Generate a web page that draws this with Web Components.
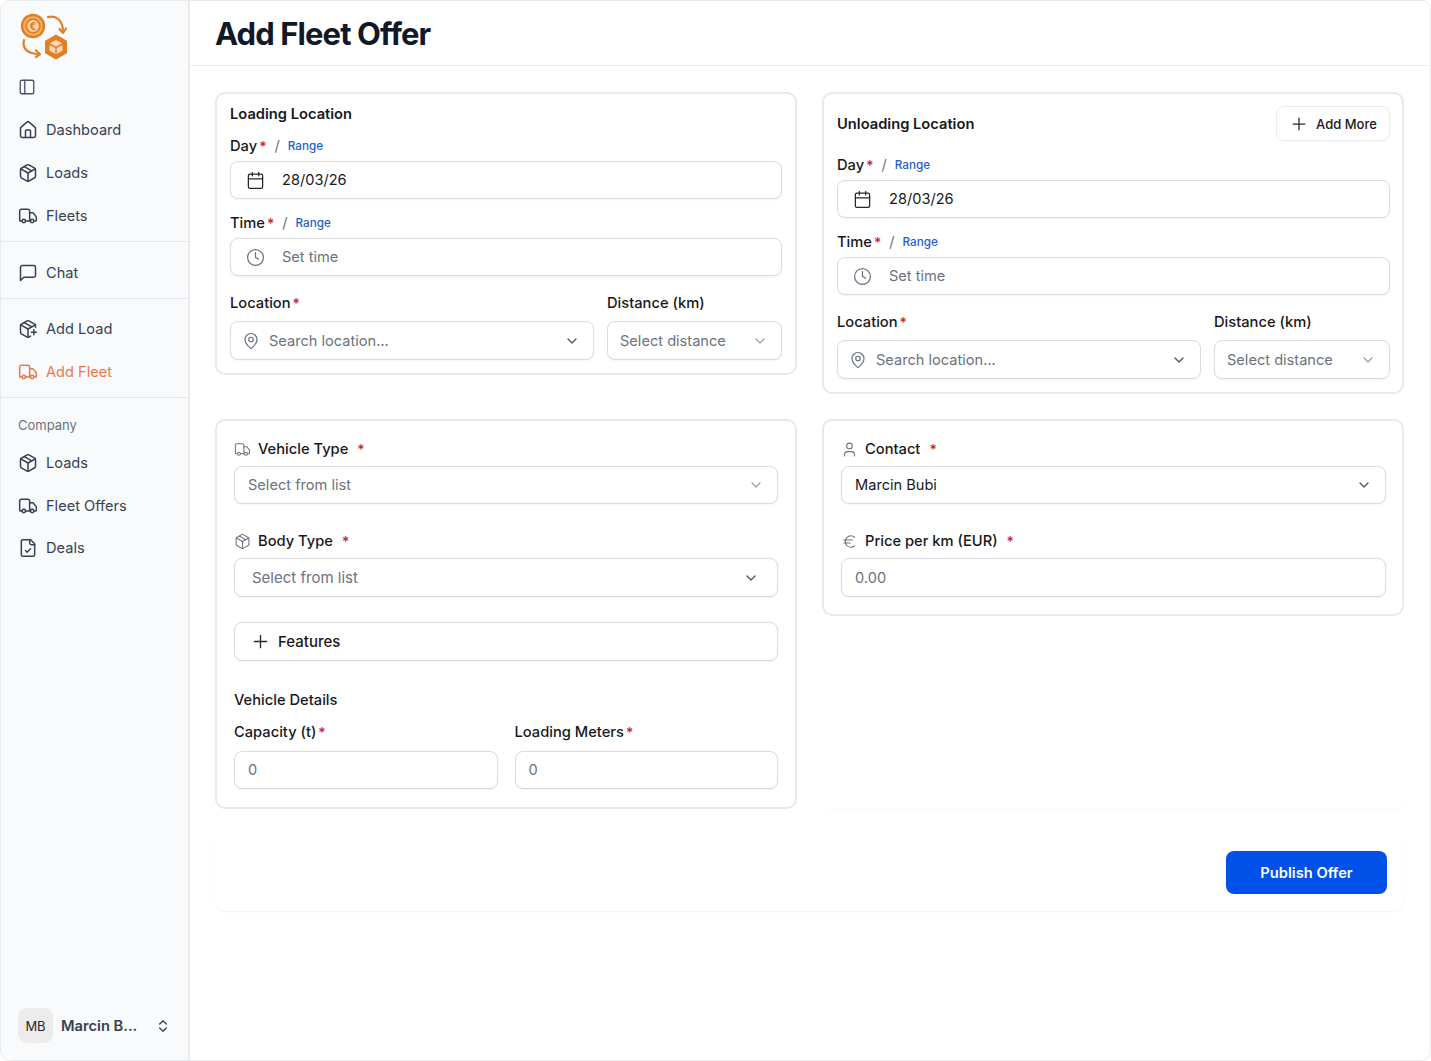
<!DOCTYPE html>
<html lang="en">
<head>
<meta charset="utf-8">
<title>Add Fleet Offer</title>
<style>
html, body { margin: 0; height: 100%; background: #fff; font-family: Inter, "Liberation Sans", sans-serif; }
</style>
</head>
<body>
<fleet-app></fleet-app>
<script>
const ICONS = {
    house: '<path d="M15 21v-8a1 1 0 0 0-1-1h-4a1 1 0 0 0-1 1v8"/><path d="M3 10a2 2 0 0 1 .709-1.528l7-5.999a2 2 0 0 1 2.582 0l7 5.999A2 2 0 0 1 21 10v9a2 2 0 0 1-2 2H5a2 2 0 0 1-2-2z"/>',
    package: '<path d="M11 21.73a2 2 0 0 0 2 0l7-4A2 2 0 0 0 21 16V8a2 2 0 0 0-1-1.73l-7-4a2 2 0 0 0-2 0l-7 4A2 2 0 0 0 3 8v8a2 2 0 0 0 1 1.73z"/><path d="M12 22V12"/><path d="m3.3 7 8.7 5 8.7-5"/><path d="m7.5 4.27 9 5.15"/>',
    truck: '<path d="M14 18V6a2 2 0 0 0-2-2H4a2 2 0 0 0-2 2v11a1 1 0 0 0 1 1h2"/><path d="M15 18H9"/><path d="M19 18h2a1 1 0 0 0 1-1v-3.65a1 1 0 0 0-.22-.624l-3.48-4.35A1 1 0 0 0 17.52 8H14"/><circle cx="17" cy="18" r="2"/><circle cx="7" cy="18" r="2"/>',
    chat: '<path d="M21 15a2 2 0 0 1-2 2H7l-4 4V5a2 2 0 0 1 2-2h14a2 2 0 0 1 2 2z"/>',
    packagePlus: '<path d="M16 16h6"/><path d="M19 13v6"/><path d="M21 10V8a2 2 0 0 0-1-1.73l-7-4a2 2 0 0 0-2 0l-7 4A2 2 0 0 0 3 8v8a2 2 0 0 0 1 1.73l7 4a2 2 0 0 0 2 0l2-1.14"/><path d="m7.5 4.27 9 5.15"/><path d="M3.29 7 12 12l8.71-5"/><path d="M12 22V12"/>',
    fileCheck: '<path d="M15 2H6a2 2 0 0 0-2 2v16a2 2 0 0 0 2 2h12a2 2 0 0 0 2-2V7Z"/><path d="M14 2v4a2 2 0 0 0 2 2h4"/><path d="m9 15 2 2 4-4"/>',
    panel: '<rect x="3" y="3" width="18" height="18" rx="2"/><path d="M9 3v18"/>',
    calendar: '<path d="M8 2v4"/><path d="M16 2v4"/><rect x="3" y="4" width="18" height="18" rx="2"/><path d="M3 10h18"/>',
    clock: '<circle cx="12" cy="12" r="10"/><path d="M12 6v6l4 2"/>',
    pin: '<path d="M20 10c0 4.993-5.539 10.193-7.399 11.799a1 1 0 0 1-1.202 0C9.539 20.193 4 14.993 4 10a8 8 0 0 1 16 0"/><circle cx="12" cy="10" r="3"/>',
    chevron: '<path d="m6 9 6 6 6-6"/>',
    updown: '<path d="m7 15 5 5 5-5"/><path d="m7 9 5-5 5 5"/>',
    plus: '<path d="M5 12h14"/><path d="M12 5v14"/>',
    user: '<path d="M19 21v-2a4 4 0 0 0-4-4H9a4 4 0 0 0-4 4v2"/><circle cx="12" cy="7" r="4"/>',
    euro: '<path d="M4 10h12"/><path d="M4 14h9"/><path d="M19 6a7.7 7.7 0 0 0-5.2-2A7.9 7.9 0 0 0 6 12c0 4.4 3.5 8 7.8 8 2 0 3.8-.8 5.2-2"/>'
}

function icon(name, size, color, width) {
    return `<svg width="${size}" height="${size}" viewBox="0 0 24 24" fill="none" stroke="${color}" stroke-width="${width || 2}" stroke-linecap="round" stroke-linejoin="round" style="flex:none;display:block">${ICONS[name]}</svg>`
}

class NavItem extends HTMLElement {
    connectedCallback() {
        const color = this.hasAttribute('active') ? '#e8794a' : '#374151'
        this.attachShadow({ mode: 'open' })
        this.shadowRoot.innerHTML = `
            <style>
                :host { display: flex; align-items: center; gap: 8px; height: 43px; padding-left: 17px; font-size: 14.6px; color: ${color}; }
            </style>
            ${icon(this.getAttribute('icon'), 20, color, 1.8)}
            <slot></slot>
        `
    }
}
customElements.define('nav-item', NavItem)

class AppSidebar extends HTMLElement {
    constructor() {
        super()
        this.attachShadow({ mode: 'open' })
        this.shadowRoot.innerHTML = `
            <style>
                :host { display: flex; flex-direction: column; flex: none; box-sizing: border-box; width: 189px; height: 100%; background: #f9fafb; border-right: 2px solid #e9eaec; border-radius: 10px 0 0 10px; }
                .logo { display: block; margin: 10px 0 0 18px; }
                .toggle { margin: 17px 0 12px 17px; }
                .group { padding-bottom: 4px; border-bottom: 1px solid #e5e7eb; margin-bottom: 9px; }
                .group.chat { margin-bottom: 8px; }
                .group.last { border: 0; margin: 0; }
                .last nav-item { height: 42.5px; }
                .company { font-size: 13px; line-height: 16px; color: #6b7280; padding: 10px 0 9px 17px; }
                .user { margin-top: auto; display: flex; align-items: center; height: 35px; padding: 0 0 17px 17px; }
                .avatar { flex: none; width: 35px; height: 35px; border-radius: 9px; background: #ececed; color: #27272a; font-size: 13px; display: flex; align-items: center; justify-content: center; }
                .name { margin-left: 8px; width: 94px; font-size: 14.7px; font-weight: 600; color: #374151; }
            </style>
            <svg class="logo" width="50" height="50" viewBox="0 0 50 50" fill="none" stroke-linecap="round" stroke-linejoin="round">
                <circle cx="14" cy="15" r="11" fill="#f5b06a" stroke="#e07f25" stroke-width="2.4"/>
                <circle cx="14" cy="15" r="6.8" fill="#fbd3a8" stroke="#e07f25" stroke-width="1.8"/>
                <text x="14" y="19" font-size="10" font-weight="700" text-anchor="middle" fill="#d9761c" font-family="Inter, sans-serif">€</text>
                <path d="M29 6c8-2 15 3 15 15" stroke="#e07f25" stroke-width="2.2"/>
                <path d="M40.500 18l3.500 4 3-4.500" stroke="#e07f25" stroke-width="2.200"/>
                <path d="M5 29c-2 8 3 14 15 14" stroke="#e07f25" stroke-width="2.2"/>
                <path d="M17 39.500l4 3.500-4 3" stroke="#e07f25" stroke-width="2.2"/>
                <path d="M37 24.500l10 5.750v11.500l-10 5.750-10-5.750v-11.500z" fill="#e07f25" stroke="#e07f25" stroke-width="2"/>
                <path d="M37 29l6.500 3.500v7l-6.500 4-6.500-4v-7z" fill="#fbd9b5"/>
                <path d="M30.500 33l6.500 3.500 6.500-3.500M37 36.500v7" stroke="#e07f25" stroke-width="1.5"/>
            </svg>
            <div class="toggle">${icon('panel', 18, '#4b5563', 1.8)}</div>
            <div class="group">
                <nav-item icon="house">Dashboard</nav-item>
                <nav-item icon="package">Loads</nav-item>
                <nav-item icon="truck">Fleets</nav-item>
            </div>
            <div class="group chat">
                <nav-item icon="chat">Chat</nav-item>
            </div>
            <div class="group">
                <nav-item icon="packagePlus">Add Load</nav-item>
                <nav-item icon="truck" active>Add Fleet</nav-item>
            </div>
            <div class="group last">
                <div class="company">Company</div>
                <nav-item icon="package">Loads</nav-item>
                <nav-item icon="truck">Fleet Offers</nav-item>
                <nav-item icon="fileCheck">Deals</nav-item>
            </div>
            <div class="user">
                <div class="avatar">MB</div>
                <div class="name">Marcin B...</div>
                ${icon('updown', 16, '#374151', 2)}
            </div>
        `
    }
}
customElements.define('app-sidebar', AppSidebar)

class FieldLabel extends HTMLElement {
    connectedCallback() {
        const ic = this.getAttribute('icon')
        const spaced = !!ic
        this.attachShadow({ mode: 'open' })
        this.shadowRoot.innerHTML = `
            <style>
                :host { display: flex; align-items: center; height: 20px; font-size: 14.7px; font-weight: 500; color: #18181b; white-space: nowrap; }
                svg { margin-right: 7px; }
                .req { color: #c81e3a; margin-left: ${spaced ? 9 : 2}px; font-size: 14px; }
                .sep { color: #6b7280; font-weight: 400; margin: 0 8px 0 8px; }
                .range { color: #1d5fc7; font-size: 11.7px; font-weight: 500; }
            </style>
            ${ic ? icon(ic, 17, '#6b7280', 1.5) : ''}
            <slot></slot>
            ${this.hasAttribute('required') ? '<span class="req">*</span>' : ''}
            ${this.hasAttribute('range') ? '<span class="sep">/</span><span class="range">Range</span>' : ''}
        `
    }
}
customElements.define('field-label', FieldLabel)

class FieldBox extends HTMLElement {
    // attrs: icon, pad, gap, h, chevron (dark|light), filled, size
    connectedCallback() {
        const ic = this.getAttribute('icon')
        const chev = this.getAttribute('chevron')
        const textColor = this.hasAttribute('filled') ? '#18181b' : '#6b7280'
        const iconColor = this.hasAttribute('filled') ? '#27272a' : '#6b7280'
        const chevColor = chev === 'light' ? '#9ca3af' : '#4b5563'
        const left = this.getAttribute('pad') || 13
        const gap = this.getAttribute('gap') || 17
        const h = this.getAttribute('h') || 38
        this.attachShadow({ mode: 'open' })
        this.shadowRoot.innerHTML = `
            <style>
                :host { display: flex; align-items: center; box-sizing: border-box; height: ${h}px; padding: 0 ${this.getAttribute('pad-right') || 13}px 0 ${left}px; gap: ${gap}px; background: #fff; border: 1px solid #d9dbdf; border-radius: 8px; box-shadow: 0 1px 2px rgba(0,0,0,.05); font-size: ${this.getAttribute('size') || 14.6}px; color: ${textColor}; white-space: nowrap; }
                .text { flex: 1; min-width: 0; }
            </style>
            ${ic ? icon(ic, this.getAttribute('icon-size') || 19, iconColor, this.getAttribute('stroke') || 1.6) : ''}
            <div class="text"><slot></slot></div>
            ${chev ? icon('chevron', 16, chevColor, 2) : ''}
        `
    }
}
customElements.define('field-box', FieldBox)

class FormCard extends HTMLElement {
    constructor() {
        super()
        this.attachShadow({ mode: 'open' })
        this.shadowRoot.innerHTML = `
            <style>
                :host { display: block; box-sizing: border-box; background: #fff; border: 2px solid #e8e9eb; border-radius: 10px; }
            </style>
            <slot></slot>
        `
    }
}
customElements.define('form-card', FormCard)

class LocationForm extends HTMLElement {
    connectedCallback() {
        const action = this.querySelector('[slot=action]')
        this.attachShadow({ mode: 'open' })
        this.shadowRoot.innerHTML = `
            <style>
                :host { display: block; }
                .wrap { padding: 10px ${action ? 12 : 13}px 13px 13px; display: flex; flex-direction: column; }
                .head { display: flex; align-items: center; justify-content: space-between; margin-bottom: ${action ? 14 : 12}px; padding-top: ${action ? 2 : 0}px; min-height: 20px; font-size: 14.7px; font-weight: 600; color: #18181b; }
                .row { display: grid; grid-template-columns: 364px 1fr; column-gap: 13px; margin-top: 17px; }
                .sp5 { margin-top: 5px; }
                .sp14 { margin-top: 14px; }
                .row field-box { margin-top: 8px; }
            </style>
            <form-card>
                <div class="wrap">
                    <div class="head"><span>${this.getAttribute('heading')}</span><slot name="action"></slot></div>
                    <field-label required range>Day</field-label>
                    <field-box class="sp5" icon="calendar" pad="15" gap="17" filled>28/03/26</field-box>
                    <field-label class="sp14" required range>Time</field-label>
                    <field-box class="sp5" icon="clock" pad="15" gap="17">Set time</field-box>
                    <div class="row">
                        <div>
                            <field-label required>Location</field-label>
                            <field-box icon="pin" h="39" pad="11" gap="9" icon-size="18" chevron="dark">Search location...</field-box>
                        </div>
                        <div>
                            <field-label>Distance (km)</field-label>
                            <field-box h="39" pad="12" chevron="light">Select distance</field-box>
                        </div>
                    </div>
                </div>
            </form-card>
        `
    }
}
customElements.define('location-form', LocationForm)

class AppButton extends HTMLElement {
    connectedCallback() {
        const primary = this.hasAttribute('primary')
        this.attachShadow({ mode: 'open' })
        this.shadowRoot.innerHTML = `
            <style>
                :host { display: inline-flex; align-items: center; justify-content: center; box-sizing: border-box; font-weight: 500; white-space: nowrap; }
                :host([primary]) { width: 161px; height: 43px; background: #0051e8; color: #fff; border-radius: 8px; font-size: 14.7px; font-weight: 600; }
                :host(:not([primary])) { width: 114px; height: 35px; gap: 7px; background: #fff; color: #18181b; border: 1px solid #ebecee; border-radius: 8px; font-size: 13px; box-shadow: 0 1px 2px rgba(0,0,0,.03); }
            </style>
            ${primary ? '' : icon('plus', 20, '#27272a', 1.5)}
            <slot></slot>
        `
    }
}
customElements.define('app-button', AppButton)

class VehicleForm extends HTMLElement {
    constructor() {
        super()
        this.attachShadow({ mode: 'open' })
        this.shadowRoot.innerHTML = `
            <style>
                :host { display: block; }
                .wrap { padding: 18px 17px 18px 17px; display: flex; flex-direction: column; }
                .s7 { margin-top: 7px; }
                .s27 { margin-top: 27px; }
                .s25 { margin-top: 25px; font-weight: 500; color: #18181b; }
                .title { margin-top: 29px; height: 20px; line-height: 20px; font-size: 14.7px; font-weight: 500; color: #18181b; }
                .pair { display: grid; grid-template-columns: 1fr 1fr; column-gap: 17px; margin-top: 12px; }
                .pair field-box { margin-top: 9px; }
            </style>
            <form-card>
                <div class="wrap">
                    <field-label icon="truck" required>Vehicle Type</field-label>
                    <field-box class="s7" chevron="light">Select from list</field-box>
                    <field-label class="s27" icon="package" required>Body Type</field-label>
                    <field-box class="s7" h="39" pad="17" pad-right="18" size="15" chevron="dark">Select from list</field-box>
                    <field-box class="s25" h="39" pad="15" gap="7" icon="plus" icon-size="21" stroke="1.5" size="15" filled>Features</field-box>
                    <div class="title">Vehicle Details</div>
                    <div class="pair">
                        <div>
                            <field-label required>Capacity (t)</field-label>
                            <field-box>0</field-box>
                        </div>
                        <div>
                            <field-label required>Loading Meters</field-label>
                            <field-box>0</field-box>
                        </div>
                    </div>
                </div>
            </form-card>
        `
    }
}
customElements.define('vehicle-form', VehicleForm)

class ContactForm extends HTMLElement {
    constructor() {
        super()
        this.attachShadow({ mode: 'open' })
        this.shadowRoot.innerHTML = `
            <style>
                :host { display: block; }
                .wrap { padding: 18px 16px 17px 17px; display: flex; flex-direction: column; }
                .s7 { margin-top: 7px; }
                .s27 { margin-top: 27px; }
            </style>
            <form-card>
                <div class="wrap">
                    <field-label icon="user" required>Contact</field-label>
                    <field-box class="s7" chevron="dark" filled>Marcin Bubi</field-box>
                    <field-label class="s27" icon="euro" required>Price per km (EUR)</field-label>
                    <field-box class="s7" h="39">0.00</field-box>
                </div>
            </form-card>
        `
    }
}
customElements.define('contact-form', ContactForm)

class FleetApp extends HTMLElement {
    constructor() {
        super()
        this.attachShadow({ mode: 'open' })
        this.shadowRoot.innerHTML = `
            <style>
                :host { display: flex; box-sizing: border-box; height: 100vh; border: 1px solid #e9eaec; border-radius: 10px; overflow: hidden; font-family: Inter, "Liberation Sans", sans-serif; }
                main { flex: 1; min-width: 0; display: flex; flex-direction: column; }
                header { height: 65px; box-sizing: border-box; border-bottom: 1px solid #eceef0; padding-left: 25px; display: flex; align-items: center; }
                h1 { margin: 1px 0 0; font-size: 31px; font-weight: 700; letter-spacing: -0.9px; color: #111827; }
                .content { padding: 26px 26px 0 25px; }
                .grid { display: grid; grid-template-columns: 582px 582px; column-gap: 25px; row-gap: 25px; align-items: start; }
                .col { align-self: stretch; border-radius: 10px; box-shadow: 0 1px 1px rgba(0,0,0,.03); }
                .foot { margin-top: 25px; padding: 17px; display: flex; justify-content: flex-end; border-radius: 10px; box-shadow: 0 1px 2px rgba(0,0,0,.05); height: 77px; box-sizing: border-box; }
            </style>
            <app-sidebar></app-sidebar>
            <main>
                <header><h1>Add Fleet Offer</h1></header>
                <div class="content">
                    <div class="grid">
                        <location-form heading="Loading Location"></location-form>
                        <location-form heading="Unloading Location"><app-button slot="action">Add More</app-button></location-form>
                        <vehicle-form></vehicle-form>
                        <div class="col"><contact-form></contact-form></div>
                    </div>
                    <div class="foot"><app-button primary>Publish Offer</app-button></div>
                </div>
            </main>
        `
    }
}
customElements.define('fleet-app', FleetApp)
</script>
</body>
</html>
